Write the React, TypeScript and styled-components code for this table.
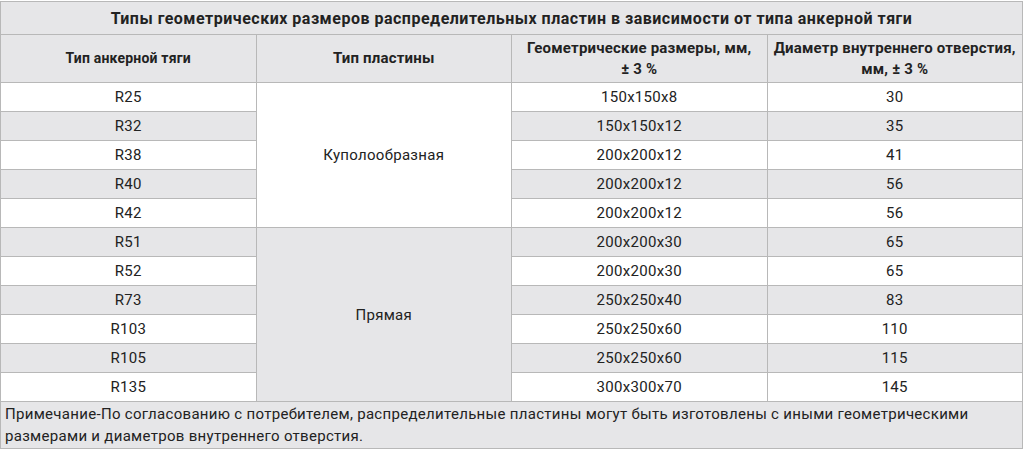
import React from 'react';
import styled, { createGlobalStyle } from 'styled-components';

const GlobalStyle = createGlobalStyle`
  html, body {
    margin: 0;
    padding: 0;
    background: #ffffff;
  }
  body {
    font-family: 'Roboto', 'Liberation Sans', sans-serif;
    color: #222222;
  }
`;

const Table = styled.table`
  width: 1023px;
  margin-top: 1px;
  border-collapse: collapse;
  table-layout: fixed;
  font-size: 15px;
  letter-spacing: 0.3px;
`;

const Row = styled.tr<{ $h: number }>`
  height: ${(p) => p.$h}px;
`;

const Cell = styled.td<{ $grey?: boolean; $left?: boolean }>`
  border: 1px solid #b8b8b8;
  background: ${(p) => (p.$grey ? '#e6e6e8' : '#ffffff')};
  text-align: ${(p) => (p.$left ? 'left' : 'center')};
  vertical-align: middle;
  padding: ${(p) => (p.$left ? '1px 4px' : '0 4px')};
  line-height: 22px;
  white-space: ${(p) => (p.$left ? 'normal' : 'nowrap')};
`;

const HeadCell = styled.th<{ $small?: boolean }>`
  border: 1px solid #b8b8b8;
  background: #e6e6e8;
  font-weight: 700;
  font-size: ${(p) => (p.$small ? '14px' : '15px')};
  letter-spacing: 0.2px;
  text-align: center;
  vertical-align: middle;
  padding: 0 2px;
  line-height: 21px;
  white-space: nowrap;
`;

const Title = styled.th`
  border: 1px solid #b8b8b8;
  background: #e6e6e8;
  font-weight: 700;
  font-size: 16px;
  letter-spacing: 0.5px;
  text-align: center;
  padding: 0;
  white-space: nowrap;
`;

type Item = { rod: string; size: string; hole: string };

const items: Item[] = [
  { rod: 'R25', size: '150x150x8', hole: '30' },
  { rod: 'R32', size: '150x150x12', hole: '35' },
  { rod: 'R38', size: '200x200x12', hole: '41' },
  { rod: 'R40', size: '200x200x12', hole: '56' },
  { rod: 'R42', size: '200x200x12', hole: '56' },
  { rod: 'R51', size: '200x200x30', hole: '65' },
  { rod: 'R52', size: '200x200x30', hole: '65' },
  { rod: 'R73', size: '250x250x40', hole: '83' },
  { rod: 'R103', size: '250x250x60', hole: '110' },
  { rod: 'R105', size: '250x250x60', hole: '115' },
  { rod: 'R135', size: '300x300x70', hole: '145' },
];

// where a merged "plate type" cell starts, and how far it reaches
const plates: Record<number, { name: string; span: number; grey: boolean }> = {
  0: { name: 'Куполообразная', span: 5, grey: false },
  5: { name: 'Прямая', span: 6, grey: true },
};

const App: React.FC = () => {
  return (
    <>
      <GlobalStyle />
      <Table>
        <thead>
          <Row $h={33}>
            <Title colSpan={4}>
              Типы геометрических размеров распределительных пластин в зависимости от типа анкерной тяги
            </Title>
          </Row>
          <Row $h={48}>
            <HeadCell $small>Тип анкерной тяги</HeadCell>
            <HeadCell>Тип пластины</HeadCell>
            <HeadCell>
              Геометрические размеры, мм,
              <br />± 3 %
            </HeadCell>
            <HeadCell>
              Диаметр внутреннего отверстия,
              <br />
              мм, ± 3 %
            </HeadCell>
          </Row>
        </thead>
        <tbody>
          {items.map((it, i) => {
            const grey = i % 2 === 1;
            const plate = plates[i];
            return (
              <Row $h={29} key={it.rod}>
                <Cell $grey={grey}>{it.rod}</Cell>
                {plate && (
                  <Cell $grey={plate.grey} rowSpan={plate.span}>
                    {plate.name}
                  </Cell>
                )}
                <Cell $grey={grey}>{it.size}</Cell>
                <Cell $grey={grey}>{it.hole}</Cell>
              </Row>
            );
          })}
          <Row $h={46}>
            <Cell $grey $left colSpan={4}>
              Примечание-По согласованию с потребителем, распределительные пластины могут быть изготовлены с иными геометрическими
              размерами и диаметров внутреннего отверстия.
            </Cell>
          </Row>
        </tbody>
      </Table>
    </>
  );
};

export default App;
